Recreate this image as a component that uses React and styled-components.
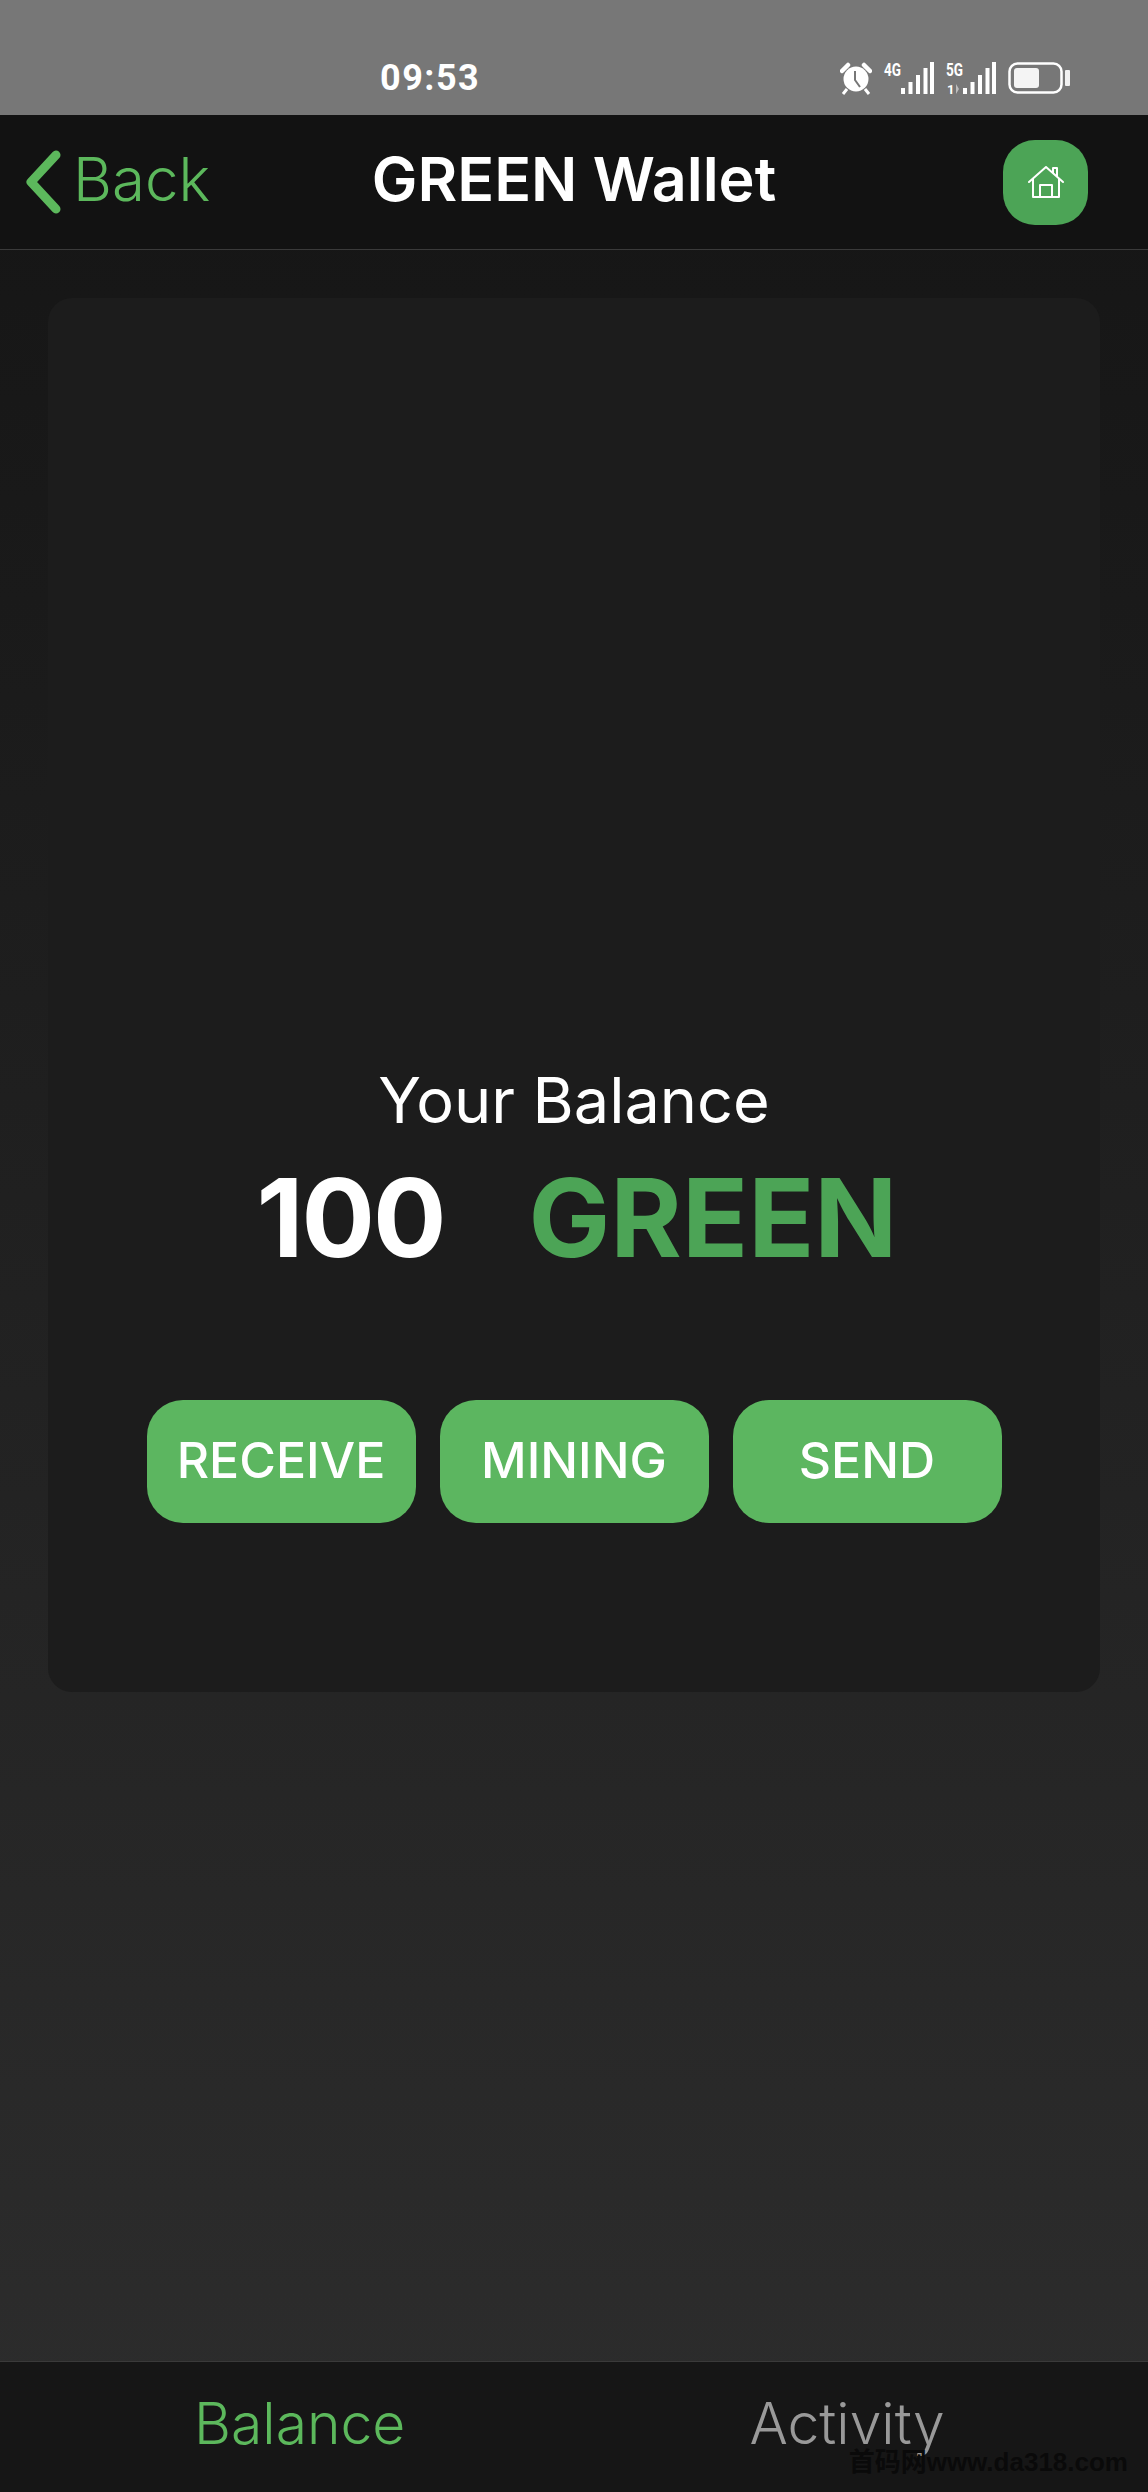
import styled, { createGlobalStyle } from 'styled-components';

const GlobalStyle = createGlobalStyle`
    html, body {
        margin: 0;
        padding: 0;
        background: #141414;
    }
    * {
        box-sizing: border-box;
    }
`;

const Page = styled.div`
    position: relative;
    width: 1148px;
    height: 2492px;
    display: flex;
    flex-direction: column;
    overflow: hidden;
    font-family: "Inter", "Liberation Sans", sans-serif;
    background: linear-gradient(180deg, #141414 0%, #2d2d2d 100%);
`;

const StatusBar = styled.div`
    height: 115px;
    flex-shrink: 0;
    background: #777777;
    display: flex;
    align-items: flex-start;
    padding: 60px 78px 0 380px;
    justify-content: space-between;
`;

const Clock = styled.span`
    font-family: "Roboto", sans-serif;
    font-size: 36px;
    line-height: 36px;
    font-weight: 700;
    letter-spacing: 1.5px;
    color: #ffffff;
`;

const StatusIcons = styled.div`
    display: flex;
    align-items: center;
    gap: 12px;
    height: 36px;
`;

const SignalIcon = styled.svg`
    overflow: visible;
`;

const Header = styled.header`
    height: 135px;
    flex-shrink: 0;
    background: #121212;
    border-bottom: 1px solid #3a3a3a;
    display: grid;
    grid-template-columns: 1fr auto 1fr;
    align-items: center;
`;

const BackLink = styled.a`
    display: flex;
    align-items: center;
    gap: 10px;
    margin-left: 25px;
    color: #5cb85c;
    font-size: 60px;
    font-weight: 300;
`;

const BackText = styled.span`
    margin-bottom: 6px;
`;

const Title = styled.h1`
    margin: 0 0 6px;
    font-size: 61px;
    font-weight: 600;
    color: #ffffff;
`;

const HomeButton = styled.button`
    justify-self: end;
    width: 85px;
    height: 85px;
    margin-right: 60px;
    border: none;
    border-radius: 32px;
    padding: 0;
    background: #4ca456;
    display: flex;
    align-items: center;
    justify-content: center;
`;

const Main = styled.main`
    flex: 1;
    padding: 48px 48px 0;
`;

const Card = styled.section`
    height: 1394px;
    border-radius: 24px;
    background: #1c1c1c;
    display: flex;
    flex-direction: column;
    align-items: center;
    padding-top: 765px;
`;

const BalanceLabel = styled.div`
    font-size: 63px;
    line-height: 74px;
    font-weight: 400;
    color: #ffffff;
`;

const Amount = styled.div`
    display: flex;
    gap: 84px;
    margin-top: 22px;
    padding-left: 6px;
    font-size: 109px;
    line-height: 116px;
    font-weight: 700;
`;

const AmountValue = styled.span`
    color: ${p => p.$accent ? '#4ca456' : '#ffffff'};
    letter-spacing: ${p => p.$accent ? '0' : '-2px'};
`;

const Actions = styled.div`
    display: flex;
    gap: 24px;
    margin-top: 125px;
`;

const ActionButton = styled.button`
    width: 269px;
    height: 123px;
    border: none;
    border-radius: 36px;
    background: #5cb660;
    color: #ffffff;
    font-family: inherit;
    font-size: 50px;
    font-weight: 500;
    padding: 0 0 4px;
`;

const TabBar = styled.nav`
    height: 131px;
    flex-shrink: 0;
    background: #161616;
    border-top: 1px solid #3a3a3a;
    display: flex;
    align-items: center;
    padding: 0 0 8px 194px;
    gap: 344px;
`;

const Tab = styled.span`
    font-size: 57px;
    font-weight: 300;
    color: ${p => p.$active ? '#5cb85c' : '#999999'};
`;

const Watermark = styled.span`
    position: absolute;
    right: 20px;
    bottom: 14px;
    font-family: "Liberation Sans", "Noto Sans CJK SC", sans-serif;
    font-size: 26px;
    font-weight: 700;
    color: #0a0a0a;
`;

const SmallLabel = styled.text`
    font-family: "Roboto", sans-serif;
    font-weight: 700;
    fill: #ffffff;
`;

const Alarm = () => (
    <svg width="32" height="33" viewBox="0 0 32 33" fill="none">
        <circle cx="16" cy="17" r="12.5" fill="#fff" />
        <path d="M15 9v9l5 7" stroke="#777" strokeWidth="2" />
        <path d="M2 9 8 3M30 9 24 3" stroke="#fff" strokeWidth="4.5" strokeLinecap="round" />
        <path d="M7 27l-4 5M25 27l4 5" stroke="#fff" strokeWidth="3" />
    </svg>
);

const bars = [[17, 26, 6], [24.5, 20, 12], [32, 13, 19], [39.5, 6, 26], [46, 0, 32]];

const Signal = ({ label, sub }) => (
    <SignalIcon width="50" height="33" viewBox="0 0 50 33">
        <SmallLabel x="0" y="14" fontSize="18" textLength="17" lengthAdjust="spacingAndGlyphs">{label}</SmallLabel>
        {sub && <SmallLabel x="1" y="32" fontSize="13">{sub}</SmallLabel>}
        {sub && <path d="M10 22v10l3-5z" fill="#bdbdbd" />}
        {bars.map(([x, y, h]) => <rect key={x} x={x} y={y} width="4" height={h} fill="#fff" />)}
    </SignalIcon>
);

const Battery = () => (
    <svg width="62" height="32" viewBox="0 0 62 32" fill="none">
        <rect x="1.5" y="1.5" width="52" height="29" rx="8" stroke="#fff" strokeWidth="2.5" />
        <rect x="6" y="6" width="25" height="20" rx="3" fill="#f4f4f4" />
        <rect x="57" y="8" width="5" height="16" rx="1" fill="#f0f0f0" />
    </svg>
);

const Chevron = () => (
    <svg width="38" height="64" viewBox="0 0 38 64" fill="none">
        <path d="M31 5 6 32l25 27" stroke="#5cb85c" strokeWidth="9" strokeLinecap="round" strokeLinejoin="round" />
    </svg>
);

const House = () => (
    <svg width="36" height="32" viewBox="0 0 36 32" fill="none" stroke="#fff" strokeWidth="2" strokeLinejoin="round">
        <path d="M1 16 18 1l17 15" strokeLinecap="round" />
        <path d="M5 13v18h26V13" />
        <path d="M12 31V19h12v12" />
        <path d="M25 7V2h4v9" />
    </svg>
);

const App = () => {
    const actions = ['RECEIVE', 'MINING', 'SEND'];

    return (
        <Page>
            <GlobalStyle />
            <StatusBar>
                <Clock>09:53</Clock>
                <StatusIcons>
                    <Alarm />
                    <Signal label="4G" />
                    <Signal label="5G" sub="1" />
                    <Battery />
                </StatusIcons>
            </StatusBar>
            <Header>
                <BackLink><Chevron /><BackText>Back</BackText></BackLink>
                <Title>GREEN Wallet</Title>
                <HomeButton><House /></HomeButton>
            </Header>
            <Main>
                <Card>
                    <BalanceLabel>Your Balance</BalanceLabel>
                    <Amount>
                        <AmountValue>100</AmountValue>
                        <AmountValue $accent>GREEN</AmountValue>
                    </Amount>
                    <Actions>
                        {actions.map(a => <ActionButton key={a}>{a}</ActionButton>)}
                    </Actions>
                </Card>
            </Main>
            <TabBar>
                <Tab $active>Balance</Tab>
                <Tab>Activity</Tab>
            </TabBar>
            <Watermark>首码网www.da318.com</Watermark>
        </Page>
    );
};

export default App;
